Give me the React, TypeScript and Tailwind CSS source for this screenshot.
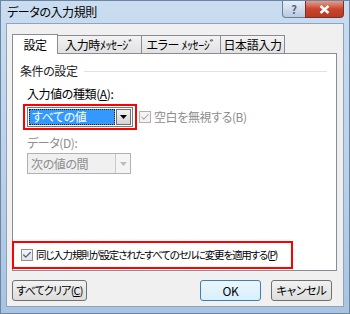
import { Check } from "lucide-react";

const jp = "font-['Meiryo_UI','Noto_Sans_CJK_JP',sans-serif] [font-feature-settings:'palt'] tracking-[-0.4px]";

function Tab({ label, w }: { label: string; w: string }) {
  return (
    <div className={`flex h-[18px] items-center justify-center whitespace-nowrap border border-b-0 border-l-0 border-[#898c95] bg-gradient-to-b from-[#f3f3f3] to-[#e1e1e1] text-[12px] text-black ${w}`}>
      {label}
    </div>
  );
}

function DropArrow({ color }: { color: string }) {
  return (
    <svg width="7" height="4" viewBox="0 0 7 4">
      <path d="M0 0h7L3.5 4z" fill={color} />
    </svg>
  );
}

function Button({ children, focused, w }: { children: React.ReactNode; focused?: boolean; w: string }) {
  return (
    <div
      className={`flex h-[21px] items-center justify-center whitespace-nowrap rounded-[3px] border text-black ${w} ${
        focused ? "border-[#3c7fb1] bg-gradient-to-b from-[#eaf6fd] to-[#d9effc]" : "border-[#707070] bg-gradient-to-b from-[#f2f2f2] to-[#dddddd]"
      }`}
    >
      {children}
    </div>
  );
}

export default function App() {
  return (
    <div className={`flex h-[314px] w-[350px] flex-col border border-[#6b86a3] bg-gradient-to-b from-[#c9dcf0] via-[#bcd2ea] to-[#a9c3e0] ${jp}`}>
      {/* title bar */}
      <div className="flex h-[22px] items-start justify-between">
        <div className="pl-[6px] pt-[5px] text-[12px] leading-none text-black">データの入力規則</div>
        <div className="flex pr-[5px]">
          <div className="flex h-[17px] w-[24px] items-center justify-center rounded-bl-[4px] border border-t-0 border-[#6d7f95] bg-gradient-to-b from-[#e6eef8] to-[#b9cbe0] text-[11px] font-bold text-[#50637a]">
            ?
          </div>
          <div className="-ml-px flex h-[17px] w-[39px] items-center justify-center rounded-br-[4px] border border-t-0 border-[#7a3128] bg-gradient-to-b from-[#e49c8d] via-[#c9452f] to-[#b93a22]">
            <svg width="11" height="9" viewBox="0 0 11 9">
              <path d="M1.5 1l8 7M9.5 1l-8 7" stroke="#fff" strokeWidth="2.4" />
            </svg>
          </div>
        </div>
      </div>

      {/* client area */}
      <div className="mx-[5px] mb-[6px] flex flex-1 flex-col border border-[#8ea4bb] bg-[#f0f0f0] px-[5px] pt-[9px]">
        <div className="flex items-end">
          <div className="relative z-10 -mb-px flex h-[20px] w-[46px] items-center justify-center border border-b-0 border-[#898c95] bg-white text-[12px] text-black">
            設定
          </div>
          <div className="mt-[2px] flex">
            <Tab label="入力時ﾒｯｾｰｼﾞ" w="w-[84px]" />
            <Tab label="エラー ﾒｯｾｰｼﾞ" w="w-[79px]" />
            <Tab label="日本語入力" w="w-[64px]" />
          </div>
        </div>

        <div className="flex h-[218px] w-[325px] flex-col border border-[#898c95] bg-white px-[7px] pt-[8px] text-[12px]">
          <div className="flex items-center">
            <span className="text-[#222]">条件の設定</span>
            <div className="ml-[6px] mr-[2px] h-px flex-1 bg-[#dde3ea]" />
          </div>

          <div className="mt-[5px] pl-[7px] text-black">
            入力値の種類(<span className="underline">A</span>):
          </div>

          <div className="mt-[1px] flex items-center">
            <div className="ml-[3px] flex h-[26px] w-[114px] items-center justify-center border-2 border-[#ff0000]">
              <div className="flex h-[20px] w-[106px] items-center border border-[#7a7a7a] bg-white p-[1px]">
                <div className="flex h-full flex-1 items-center border border-dotted border-[#1a1a1a] bg-[#3399ff] pl-[2px] text-white">
                  すべての値
                </div>
                <div className="ml-[1px] flex h-full w-[15px] items-center justify-center border border-[#707070] bg-gradient-to-b from-[#f2f2f2] to-[#d4d4d4]">
                  <DropArrow color="#000" />
                </div>
              </div>
            </div>
            <div className="ml-[2px] flex h-[12px] w-[12px] items-center justify-center border border-[#b1b1b1] bg-[#f4f4f4]">
              <Check size={10} strokeWidth={2.5} color="#a8a8a8" />
            </div>
            <span className="ml-[3px] text-[#8d8d8d]">空白を無視する(B)</span>
          </div>

          <div className="mt-[4px] pl-[7px] text-[#8d8d8d]">データ(D):</div>
          <div className="ml-[7px] mt-[1px] flex h-[21px] w-[104px] items-center border border-[#adb2b5] bg-[#f0f0f0]">
            <span className="flex-1 pl-[3px] text-[#8d8d8d]">次の値の間</span>
            <div className="flex h-full w-[15px] items-center justify-center border-l border-[#c8c8c8] bg-[#f4f4f4]">
              <DropArrow color="#bdbdbd" />
            </div>
          </div>

          <div className="flex-1" />

          <div className="-ml-[8px] mb-[1px] flex h-[28px] w-[281px] items-center border-2 border-[#ff0000] pl-[7px]">
            <div className="flex h-[12px] w-[12px] items-center justify-center border border-[#8f8f8f] bg-gradient-to-b from-[#f6f6f6] to-[#e3e3e3]">
              <Check size={10} strokeWidth={3} color="#4a5f8a" />
            </div>
            <span className="ml-[3px] whitespace-nowrap text-[10.5px] tracking-[-1.2px] text-black">
              同じ入力規則が設定されたすべてのセルに変更を適用する(<span className="underline">P</span>)
            </span>
          </div>
        </div>

        <div className="mt-[9px] flex items-center">
          <Button w="w-[75px] text-[11px] tracking-[-0.8px]">
            すべてクリア(<span className="underline">C</span>)
          </Button>
          <div className="flex-1" />
          <Button w="w-[61px] text-[12px]" focused>
            OK
          </Button>
          <div className="w-[10px]" />
          <Button w="w-[61px] text-[11.5px]">キャンセル</Button>
          <div className="w-[6px]" />
        </div>
      </div>
    </div>
  );
}
